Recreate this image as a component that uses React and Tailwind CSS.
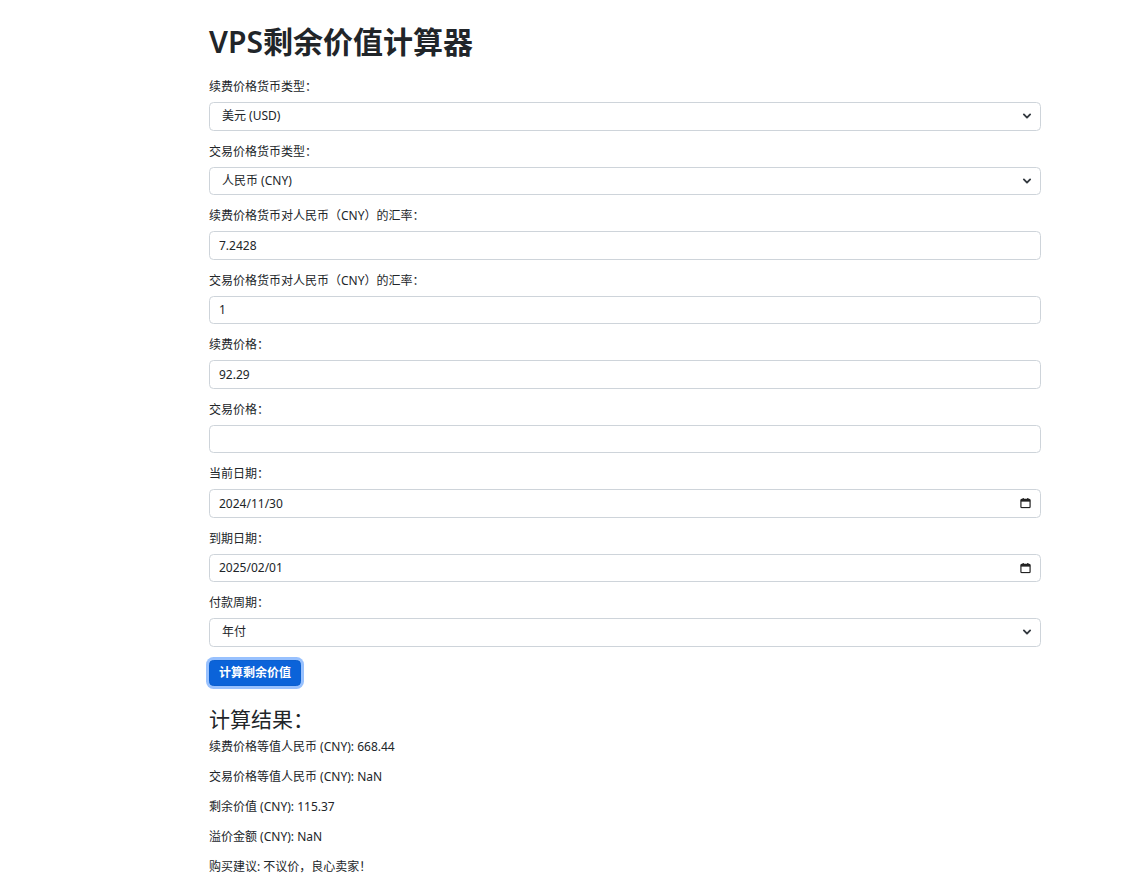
import React, { useState } from 'react'

const font = { fontFamily: '"Noto Sans", "Noto Sans CJK SC", sans-serif' }

const Chevron = () => (
  <svg className="pointer-events-none absolute right-[9px] top-1/2 -translate-y-1/2" width="10" height="10" viewBox="0 0 16 16">
    <path d="m3 5.5 5 5 5-5" fill="none" stroke="#343a40" strokeWidth="3" strokeLinecap="round" strokeLinejoin="round" />
  </svg>
)

const CalendarIcon = () => (
  <svg className="pointer-events-none absolute right-[10px] top-1/2 -translate-y-1/2" width="11" height="11" viewBox="0 0 12 12">
    <rect x="1" y="2" width="10" height="9" rx="1" fill="none" stroke="#222" strokeWidth="1.3" />
    <rect x="1" y="2" width="10" height="2.5" fill="#222" />
    <path d="M3.5 0.5v2M8.5 0.5v2" stroke="#222" strokeWidth="1.3" />
  </svg>
)

const inputClass = 'block w-full h-[28.5px] px-[9px] text-[12px] leading-[18px] text-[#212529] bg-white border border-[#ced4da] rounded-[4.5px] outline-none'

const Field = ({ label, children }) => (
  <div className="mb-[12px]">
    <label className="block mb-[6px] text-[12px] leading-[18px] text-[#212529]">{label}</label>
    {children}
  </div>
)

const SelectField = ({ label, value, onChange, options }) => (
  <Field label={label}>
    <div className="relative">
      <select value={value} onChange={onChange} className={inputClass + ' appearance-none pl-[12px] pr-[30px]'} style={font}>
        {options.map((o) => (
          <option key={o.value} value={o.value}>{o.label}</option>
        ))}
      </select>
      <Chevron />
    </div>
  </Field>
)

const currencies = [
  { value: 'USD', label: '美元 (USD)' },
  { value: 'CNY', label: '人民币 (CNY)' },
  { value: 'EUR', label: '欧元 (EUR)' },
]

const App = () => {
  const [renewCur, setRenewCur] = useState('USD')
  const [tradeCur, setTradeCur] = useState('CNY')
  const [renewRate, setRenewRate] = useState('7.2428')
  const [tradeRate, setTradeRate] = useState('1')
  const [renewPrice, setRenewPrice] = useState('92.29')
  const [tradePrice, setTradePrice] = useState('')
  const [cycle, setCycle] = useState('year')

  return (
    <div className="min-h-[894px] bg-white text-[#212529]" style={font}>
      <div className="ml-[209px] w-[832px] pt-[24px] pb-[10px]">
        <h1 className="text-[30px] leading-[36px] font-semibold mb-[18px]">VPS剩余价值计算器</h1>

        <SelectField label="续费价格货币类型：" value={renewCur} onChange={(e) => setRenewCur(e.target.value)} options={currencies} />
        <SelectField label="交易价格货币类型：" value={tradeCur} onChange={(e) => setTradeCur(e.target.value)} options={currencies} />

        <Field label="续费价格货币对人民币（CNY）的汇率：">
          <input className={inputClass} style={font} value={renewRate} onChange={(e) => setRenewRate(e.target.value)} />
        </Field>
        <Field label="交易价格货币对人民币（CNY）的汇率：">
          <input className={inputClass} style={font} value={tradeRate} onChange={(e) => setTradeRate(e.target.value)} />
        </Field>
        <Field label="续费价格：">
          <input className={inputClass} style={font} value={renewPrice} onChange={(e) => setRenewPrice(e.target.value)} />
        </Field>
        <Field label="交易价格：">
          <input className={inputClass} style={font} value={tradePrice} onChange={(e) => setTradePrice(e.target.value)} />
        </Field>
        <Field label="当前日期：">
          <div className="relative">
            <input className={inputClass} style={font} defaultValue="2024/11/30" />
            <CalendarIcon />
          </div>
        </Field>
        <Field label="到期日期：">
          <div className="relative">
            <input className={inputClass} style={font} defaultValue="2025/02/01" />
            <CalendarIcon />
          </div>
        </Field>
        <SelectField
          label="付款周期："
          value={cycle}
          onChange={(e) => setCycle(e.target.value)}
          options={[
            { value: 'month', label: '月付' },
            { value: 'quarter', label: '季付' },
            { value: 'half', label: '半年付' },
            { value: 'year', label: '年付' },
          ]}
        />

        <button
          type="button"
          className="h-[26px] px-[9px] text-[12px] leading-[18px] font-semibold text-white bg-[#0b63d9] rounded-[4.5px] border border-[#0a5fcf] shadow-[0_0_0_3px_rgba(49,132,253,0.5)]"
          style={font}
        >
          计算剩余价值
        </button>

        <h3 className="mt-[21px] mb-[6px] text-[21px] leading-[25px] font-normal">计算结果：</h3>
        <div className="text-[12px] leading-[18px]">
          <p className="mb-[12px]">续费价格等值人民币 (CNY): 668.44</p>
          <p className="mb-[12px]">交易价格等值人民币 (CNY): NaN</p>
          <p className="mb-[12px]">剩余价值 (CNY): 115.37</p>
          <p className="mb-[12px]">溢价金额 (CNY): NaN</p>
          <p className="mb-[12px]">购买建议: 不议价，良心卖家！</p>
        </div>
      </div>
    </div>
  )
}

export default App
